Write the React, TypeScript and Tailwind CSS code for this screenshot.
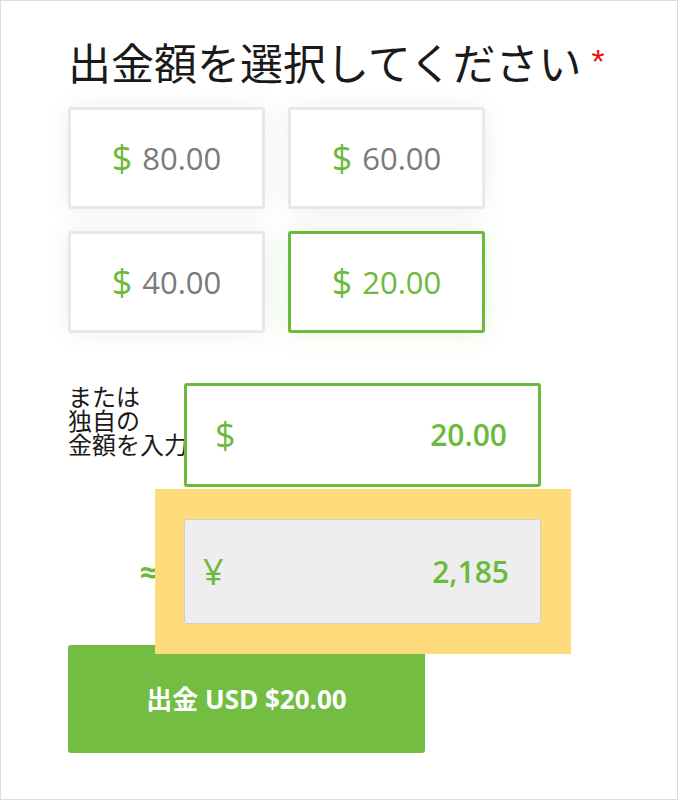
import React from 'react';

const amounts = ['80.00', '60.00', '40.00', '20.00'];
const selected = '20.00';

const latin = "font-['Open_Sans','Noto_Sans_CJK_JP',sans-serif]";

export default function App() {
  return (
    <div className="w-[678px] h-[800px] bg-white border border-[#dcdcdc] overflow-hidden">
      <div className="pl-[67px] pt-[39px]">
        <h1 className="flex items-start text-[43px] leading-[43px] text-[#1a1a1a] font-['Noto_Sans_CJK_JP',sans-serif] font-normal">
          出金額を選択してください
          <span className="ml-[10px] mt-[6px] text-[34px] leading-[30px] text-[#ee1111] font-['Liberation_Sans',sans-serif]">*</span>
        </h1>

        <div className="mt-[24px] grid grid-cols-[197px_197px] gap-x-[23px] gap-y-[22px]">
          {amounts.map((a) => {
            const active = a === selected;
            return (
              <div
                key={a}
                className={
                  active
                    ? 'h-[102px] rounded-[3px] border-[3px] border-[#6cba3c] bg-white flex items-center justify-center shadow-[0_0_26px_rgba(108,186,60,0.16)]'
                    : 'h-[102px] rounded-[3px] border-[3px] border-[#e8e8e8] bg-white flex items-center justify-center shadow-[0_0_26px_rgba(0,0,0,0.07)]'
                }
              >
                <span className={`${latin} text-[36px] leading-none text-[#6cba3c]`}>$</span>
                <span
                  className={`${latin} ml-[10px] text-[31px] leading-none ${active ? 'text-[#6cba3c]' : 'text-[#7b7b7b]'}`}
                >
                  {a}
                </span>
              </div>
            );
          })}
        </div>

        <div className="mt-[50px] flex items-start">
          <div className="w-[116px] shrink-0 whitespace-nowrap pt-[1px] text-[24px] leading-[24px] text-[#1a1a1a] font-['Noto_Sans_CJK_JP',sans-serif]">
            または
            <br />
            独自の
            <br />
            金額を入力
          </div>
          <div className="relative z-10 w-[357px] h-[104px] rounded-[3px] border-[3px] border-[#6cba3c] bg-white flex items-center justify-between pl-[28px] pr-[31px]">
            <span className={`${latin} text-[36px] leading-none text-[#6cba3c]`}>$</span>
            <span className={`${latin} text-[30px] leading-none font-semibold text-[#6cba3c]`}>20.00</span>
          </div>
        </div>

        <div className="mt-[2px] flex items-center">
          <div className="w-[87px] shrink-0 flex justify-end">
            <span className={`${latin} -mr-[3px] text-[32px] leading-none font-bold text-[#6cba3c]`}>≈</span>
          </div>
          <div className="relative z-20 w-[416px] h-[165px] bg-[#ffdc7b] pl-[29px] pt-[30px]">
            <div className="w-[357px] h-[105px] rounded-[3px] border border-[#cfcfcf] bg-[#eeeeee] flex items-center justify-between pl-[18px] pr-[31px]">
              <span className={`${latin} text-[36px] leading-none text-[#6cba3c]`}>¥</span>
              <span className={`${latin} text-[30px] leading-none font-semibold text-[#6cba3c]`}>2,185</span>
            </div>
          </div>
        </div>

        <button
          className={`${latin} -mt-[9px] w-[357px] h-[108px] rounded-[3px] bg-[#72bd42] text-white text-[26px] font-bold flex items-center justify-center`}
        >
          出金 USD $20.00
        </button>
      </div>
    </div>
  );
}
